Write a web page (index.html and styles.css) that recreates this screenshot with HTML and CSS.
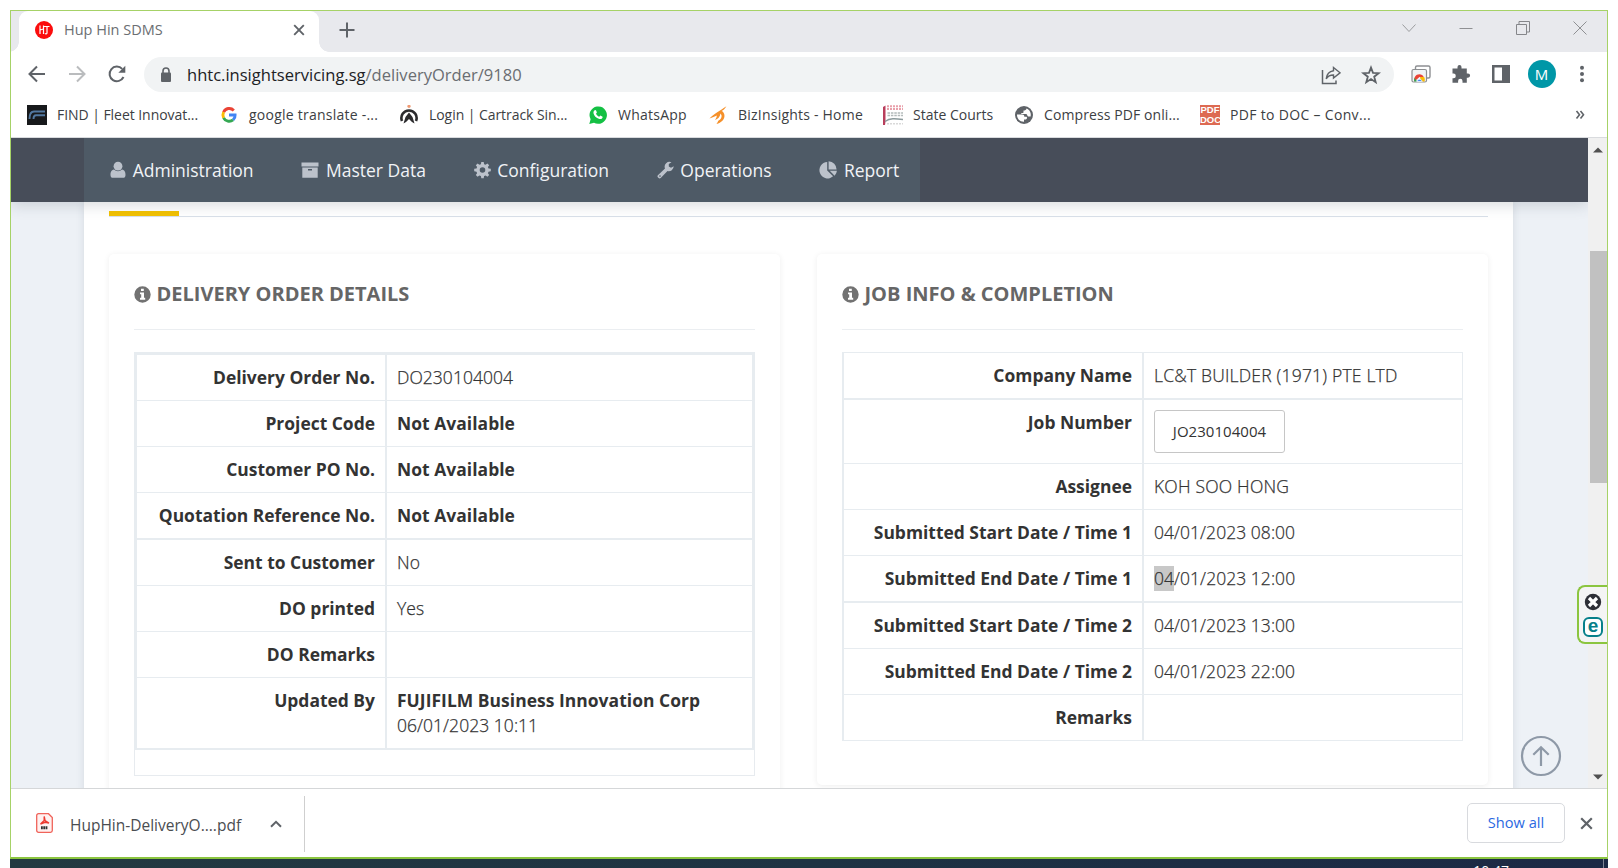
FILE: index.html
```html
<!DOCTYPE html>
<html lang="en">
<head>
<meta charset="utf-8">
<title>Hup Hin SDMS</title>
<link rel="stylesheet" href="styles.css">
</head>
<body>
<div class="window">
  <header class="tabstrip">
    <div class="tab">
      <svg class="fav" width="18" height="18" viewBox="0 0 18 18"><circle cx="9" cy="9" r="9" fill="#fb0d0d"/><path d="M5 4.500v8.500M5 9l3.500-1M8.500 4.500v8.500M8.500 5.500h6M12 5.500v6.500c0 1-1.500 1-2 .3" stroke="#fff" stroke-width="1.200" fill="none"/></svg>
      <span class="tab-title">Hup Hin SDMS</span>
      <svg class="tab-x" width="12" height="12" viewBox="0 0 12 12"><path d="M1.200 1.200l9.600 9.600M10.800 1.200l-9.600 9.600" stroke="#5f6368" stroke-width="1.900"/></svg>
    </div>
    <svg class="plus" width="16" height="16" viewBox="0 0 16 16"><path d="M8 .5v15M.5 8h15" stroke="#5f6368" stroke-width="2"/></svg>
    <div class="controls">
      <span><svg width="14" height="14" viewBox="0 0 14 14"><path d="M.5 3.500L7 10.500l6.500-7" fill="none" stroke="#9b9c9f"/></svg></span>
      <span><svg width="14" height="14" viewBox="0 0 14 14"><path d="M.5 7.500h13" stroke="#8f9093"/></svg></span>
      <span><svg width="14" height="14" viewBox="0 0 14 14"><path d="M.5 3.500h10v10h-10zM3 3.500v-3h10.500v10.500h-3" fill="none" stroke="#85868a"/></svg></span>
      <span><svg width="14" height="14" viewBox="0 0 14 14"><path d="M.5.5l13 13M13.500.5l-13 13" stroke="#8f9093"/></svg></span>
    </div>
  </header>

  <div class="toolbar">
    <svg width="20" height="20" viewBox="0 0 20 20"><path d="M18 10H3M10 2.500L2.500 10l7.500 7.500" fill="none" stroke="#5f6368" stroke-width="2"/></svg>
    <svg width="20" height="20" viewBox="0 0 20 20"><path d="M2 10h15M10 2.500l7.500 7.500-7.500 7.500" fill="none" stroke="#babcbe" stroke-width="2"/></svg>
    <svg width="20" height="20" viewBox="0 0 20 20"><path d="M16.500 13A7.300 7.300 0 1 1 15.200 4.900" fill="none" stroke="#5f6368" stroke-width="2"/><path d="M18.300 1.800v7h-7z" fill="#5f6368"/></svg>
    <div class="address">
      <svg width="20" height="20" viewBox="0 0 20 20"><rect x="5" y="7.500" width="10" height="9.500" rx="1" fill="#5f6368"/><path d="M7 8V6a3 3 0 0 1 6 0v2" fill="none" stroke="#5f6368" stroke-width="1.600"/></svg>
      <span class="url">hhtc.insightservicing.sg<span class="path">/deliveryOrder/9180</span></span>
      <svg class="share" width="20" height="20" viewBox="0 0 20 20"><path d="M1.500 5v13.500H15V15.500" fill="none" stroke="#5f6368" stroke-width="1.500"/><path d="M12.500 2.500l6.500 5.300-6.500 5.200V10c-3.500 0-5.700 1.200-7.300 3.800C5.700 9.500 8.200 6.300 12.500 5.700z" fill="none" stroke="#5f6368" stroke-width="1.400"/></svg>
      <svg width="20" height="20" viewBox="0 0 20 20"><path d="M10 2.600l2 5.300 5.600.3-4.400 3.500 1.500 5.500L10 14.100l-4.700 3.100 1.500-5.500L2.400 8.200 8 7.900z" fill="none" stroke="#5f6368" stroke-width="1.800"/></svg>
    </div>
    <svg width="20" height="20" viewBox="0 0 20 20"><rect x="4.500" y="2" width="14.500" height="12" rx="1.500" fill="#fff" stroke="#8d8f92" stroke-width="1.400"/><rect x="1" y="5.500" width="14.500" height="12.500" rx="1.500" fill="#f1f3f4" stroke="#8d8f92" stroke-width="1.200"/><path d="M3.300 17.500c-.8-4 1.500-7.300 5.100-7.300 2 0 3.500 1 4.300 2.800H8.500z" fill="#ea4335"/><path d="M9 13h4.200c.8 1.500.8 3 .3 4.500H10z" fill="#fbbc04"/><path d="M3.300 17.500a5 5 0 0 1 .2-3.500l2.800 3.500z" fill="#34a853"/><path d="M5.700 17.500a2.900 2.900 0 0 1 5.600 0z" fill="#4285f4" stroke="#fff" stroke-width=".7"/></svg>
    <svg width="20" height="20" viewBox="0 0 20 20"><path d="M1.500 4.500h5V3a2 2 0 0 1 4 0v1.500h5.300v5H17a2 2 0 0 1 0 4.200h-1.200v5H11.500V17a2.200 2.200 0 0 0-4.400 0v1.700H1.500v-4.500h1a2.300 2.300 0 0 0 0-4.600h-1z" fill="#5f6368"/></svg>
    <svg width="20" height="20" viewBox="0 0 20 20"><path d="M1 1h18v18H1zM3.500 3.500v13H11v-13z" fill="#5f6368" fill-rule="evenodd"/></svg>
    <span class="avatar">M</span>
    <svg width="20" height="20" viewBox="0 0 20 20"><g fill="#5f6368"><circle cx="10" cy="3.800" r="2"/><circle cx="10" cy="10" r="2"/><circle cx="10" cy="16.200" r="2"/></g></svg>
  </div>

  <nav class="bookmarks">
    <a class="bm"><svg width="20" height="20" viewBox="0 0 20 20"><path d="M0 0h20v20H0z" fill="#17191b"/><path d="M2.500 14c0-5 1-7.500 4.500-7.500h11M6.500 14c0-2.500.8-3.700 2.500-3.700h9" fill="none" stroke="#5278a0" stroke-width="1.900"/></svg><span class="t1">FIND | Fleet Innovat...</span></a>
    <a class="bm"><svg width="20" height="20" viewBox="0 0 20 20"><g fill="none" stroke-width="2.900"><path d="M14.800 5.400A6.200 6.200 0 0 0 4.600 7.200" stroke="#ea4335"/><path d="M4.600 7.200a6.400 6.400 0 0 0 0 5.600" stroke="#fbbc05"/><path d="M4.600 12.800a6.200 6.200 0 0 0 9.500 2.100" stroke="#34a853"/><path d="M14.100 14.900a6 6 0 0 0 2-4.900H10" stroke="#4285f4"/></g></svg><span class="t2">google translate -...</span></a>
    <a class="bm"><svg width="20" height="20" viewBox="0 0 20 20"><path d="M3 16A7.600 7.600 0 1 1 17 16" fill="none" stroke="#2b2b2d" stroke-width="2.600"/><path d="M10 7.500l3.500 4.500 2 6.500-2.500-1.500-3-3-3 3-2.500 1.500 2-6.500z" fill="#2b2b2d"/><circle cx="10" cy="1.300" r="1.600" fill="#f09a72"/></svg><span class="t3">Login | Cartrack Sin...</span></a>
    <a class="bm"><svg width="20" height="20" viewBox="0 0 20 20"><path d="M1.300 19l1.300-4.700A8.700 8.700 0 1 1 6 17.700z" fill="#14c044"/><path d="M6.300 5.600c.8-.9 1.500-.8 1.900.2l.7 1.700-.9 1.300c.8 1.500 1.700 2.300 3.200 3l1.200-1.200 2.200 1.100c.3 2-1.700 2.700-3.200 2.300C8 13 6 10.500 5.500 8.200c-.1-1 .1-1.900.8-2.600z" fill="#fff"/></svg><span class="t4">WhatsApp</span></a>
    <a class="bm"><svg width="20" height="20" viewBox="0 0 20 20"><path d="M1.500 13.500C5 9.500 12 5.500 18.500 1.200 17 3.500 15.500 5 13.500 6c4 1.500 5.500 10-5 13 .8-1.200 1.500-2 1.800-3.200 3.500-1.800 4.200-5 2.200-7.300-.5 3.500-2.500 5.500-5.500 6.500 1.200-1.700 1.800-3 1.800-4.500-2 .8-4.500 2-7.300 3z" fill="#f5902a"/></svg><span class="t5">BizInsights - Home</span></a>
    <a class="bm"><svg width="20" height="20" viewBox="0 0 20 20"><path d="M0 2l2.500-1.500v16L2 20H0z" fill="#b93e5c"/><path d="M4 1.300h16M4 4h16" stroke="#e9a0ab" stroke-width="1.900" stroke-dasharray="2 1"/><path d="M4.500 8h15.500M4.500 10.500h15.500" stroke="#b3baba" stroke-width="1.600" stroke-dasharray="2.500 .9"/><path d="M2 16.500c5-3.500 10-3 18-2" fill="none" stroke="#8c9a9c" stroke-width="1.500"/><path d="M4 18.800h16" stroke="#d9d9d9" stroke-width="1.500" stroke-dasharray="2 1"/></svg><span class="t6">State Courts</span></a>
    <a class="bm"><svg width="20" height="20" viewBox="0 0 20 20"><circle cx="10" cy="10" r="9" fill="#5f6368"/><path d="M3 9.500h5c2.300 0 2.300 1 2.300 2.300h1.600c1.800 0 1.500 2.400-.2 2.600H10v2.300c-4 .2-7.200-3-7-7.200zM12.500 3.400c-.3 1.600-1.200 2-3 2v1.800c0 .8-1 .8-2.200.8v1h5c1 0 1 2.500 1.800 2.500h2.500C17.600 8 15.500 4.500 12.500 3.400z" fill="#fff"/></svg><span class="t7">Compress PDF onli...</span></a>
    <a class="bm"><span class="pdfdoc"><i>PDF</i><i>DOC</i></span><span class="t8">PDF to DOC – Conv...</span></a>
    <svg class="more" width="10" height="10" viewBox="0 0 10 10"><path d="M1.500 1l3 3.800-3 3.800M5.500 1l3 3.800-3 3.800" fill="none" stroke="#5f6368" stroke-width="1.600"/></svg>
  </nav>

  <div class="viewport">
    <div class="page">
      <div class="navbar">
        <ul class="menu">
          <li><svg width="16" height="18" viewBox="0 0 16 18"><circle cx="8" cy="5.200" r="4.400"/><path d="M4 8.600C1.200 9 .5 11.500.5 14c0 2 1 2.800 2.500 2.800h10c1.500 0 2.500-.8 2.500-2.800 0-2.500-.7-5-3.500-5.400a5.600 5.600 0 0 1-8 0z"/></svg>Administration</li>
          <li><svg width="18" height="18" viewBox="0 0 18 18"><path d="M.5 1.500h17v4H.5zM1.300 6.500h15.400v10.300H1.300zM7 8v1.400h4V8z" fill-rule="evenodd"/></svg>Master Data</li>
          <li><svg width="17" height="18" viewBox="0 0 17 18"><path d="M7.300 1h2.400l.4 2.200 1.500.6 1.800-1.300 1.800 1.800L13.900 6l.6 1.500 2.300.3v2.500l-2.300.4-.6 1.500 1.300 1.800-1.800 1.800-1.800-1.300-1.500.6-.4 2.200H7.300l-.4-2.200-1.500-.6-1.800 1.300L1.800 14l1.300-1.800-.6-1.500-2.300-.4V7.800l2.300-.3L3.100 6 1.800 4.300l1.800-1.800 1.800 1.300 1.500-.6zM8.500 6.200a2.800 2.800 0 1 0 0 5.600 2.800 2.800 0 0 0 0-5.600z" fill-rule="evenodd"/></svg>Configuration</li>
          <li><svg width="17" height="18" viewBox="0 0 17 18"><path d="M.9 14.200L8 7.500A4.900 4.900 0 0 1 14.500 1.200L11.800 3v2.500l2.200 1.300 2.700-1.600A4.900 4.900 0 0 1 10.500 10l-6.800 7c-.7.700-1.500.6-2.100 0l-.7-.7c-.6-.6-.6-1.500 0-2.100zM3 14.300a.8.800 0 1 0 0 1.600.8.800 0 0 0 0-1.600z" fill-rule="evenodd"/></svg>Operations</li>
          <li><svg width="18" height="18" viewBox="0 0 18 18"><path d="M8.200 1v8.400l5.900 5.900A8.200 8.200 0 1 1 8.200 1zM9.600.3a8.200 8.200 0 0 1 8 8.200h-8zM10.700 9.800h7.200a8 8 0 0 1-2.300 5z"/></svg>Report</li>
        </ul>
      </div>
      <main class="container">
        <div class="tabline"><span class="active-tab"></span></div>
        <div class="cards">
          <section class="card tall">
            <h2><svg width="17" height="17" viewBox="0 0 17 17"><path d="M8.500.3a8.200 8.200 0 1 0 0 16.400 8.200 8.200 0 0 0 0-16.400zM7 2.800h2.800v2.300H7zM6 6.500h4v5.300h1.200v1.900H6v-1.900h1.200V8.300H6z" fill="#727272" fill-rule="evenodd"/></svg>DELIVERY ORDER DETAILS</h2>
            <div class="frame">
              <table class="details thick">
                <tr><th>Delivery Order No.</th><td>DO230104004</td></tr>
                <tr><th>Project Code</th><td><b>Not Available</b></td></tr>
                <tr><th>Customer PO No.</th><td><b>Not Available</b></td></tr>
                <tr class="heavy"><th>Quotation Reference No.</th><td><b>Not Available</b></td></tr>
                <tr><th>Sent to Customer</th><td>No</td></tr>
                <tr><th>DO printed</th><td>Yes</td></tr>
                <tr><th>DO Remarks</th><td></td></tr>
                <tr class="heavy"><th>Updated By</th><td><b>FUJIFILM Business Innovation Corp</b><br>06/01/2023 10:11</td></tr>
              </table>
            </div>
          </section>
          <section class="card">
            <h2><svg width="17" height="17" viewBox="0 0 17 17"><path d="M8.500.3a8.200 8.200 0 1 0 0 16.400 8.200 8.200 0 0 0 0-16.400zM7 2.800h2.800v2.300H7zM6 6.500h4v5.300h1.200v1.900H6v-1.900h1.200V8.300H6z" fill="#727272" fill-rule="evenodd"/></svg>JOB INFO &amp; COMPLETION</h2>
            <table class="details job">
              <tr class="heavy"><th>Company Name</th><td class="caps">LC&amp;T BUILDER (1971) PTE LTD</td></tr>
              <tr><th>Job Number</th><td><span class="btn">JO230104004</span></td></tr>
              <tr><th>Assignee</th><td class="caps">KOH SOO HONG</td></tr>
              <tr><th>Submitted Start Date / Time 1</th><td>04/01/2023 08:00</td></tr>
              <tr class="heavy"><th>Submitted End Date / Time 1</th><td><span class="selected">04</span>/01/2023 12:00</td></tr>
              <tr><th>Submitted Start Date / Time 2</th><td>04/01/2023 13:00</td></tr>
              <tr><th>Submitted End Date / Time 2</th><td>04/01/2023 22:00</td></tr>
              <tr><th>Remarks</th><td></td></tr>
            </table>
          </section>
        </div>
      </main>
      <svg class="to-top" width="42" height="42" viewBox="0 0 42 42"><g fill="none" stroke="#8e99a7" stroke-width="2.200"><circle cx="21" cy="21" r="19"/><path d="M21 31V12.500M13.300 19.800l7.700-7.600 7.700 7.600"/></g></svg>
    </div>
    <div class="scrollbar">
      <svg width="10" height="6" viewBox="0 0 10 6"><path d="M0 5.500L5 .5l5 5z" fill="#505050"/></svg>
      <div class="thumb"></div>
      <svg class="down" width="10" height="6" viewBox="0 0 10 6"><path d="M0 .5l5 5 5-5z" fill="#505050"/></svg>
    </div>
    <div class="widget">
      <svg width="18" height="18" viewBox="0 0 18 18"><circle cx="9" cy="9" r="8.200" fill="#2e2f36"/><path d="M5 5l8 8M13 5l-8 8" stroke="#fff" stroke-width="3.200"/></svg>
      <span class="e">e</span>
    </div>
  </div>

  <footer class="shelf">
    <svg class="pdf" width="17" height="20" viewBox="0 0 17 20"><path d="M2.500.7h10l3.800 3.800v13a1.800 1.800 0 0 1-1.800 1.800h-12a1.800 1.800 0 0 1-1.800-1.800v-15A1.800 1.800 0 0 1 2.500.7z" fill="#fff1f0" stroke="#f0635a" stroke-width="1.300"/><path d="M8.200 3.500v4L4.500 11l4.500-1.700 4 .7-4-2.500z" fill="none" stroke="#ee3a30" stroke-width="1.400"/><path d="M5 14.800h6.500" stroke="#333" stroke-width="3" stroke-dasharray="1.800 .5"/></svg>
    <span class="file">HupHin-DeliveryO....pdf</span>
    <svg class="caret" width="12" height="8" viewBox="0 0 12 8"><path d="M1 6.800l5-5 5 5" fill="none" stroke="#5f6368" stroke-width="2"/></svg>
    <span class="sep"></span>
    <span class="showall">Show all</span>
    <svg class="close" width="13" height="13" viewBox="0 0 13 13"><path d="M1.200 1.200l10.600 10.600M11.800 1.200L1.200 11.800" stroke="#5f6368" stroke-width="2.200"/></svg>
  </footer>
</div>
<div class="taskbar"><span class="clock">10:47</span><span class="peek"></span></div>
</body>
</html>
```

FILE: styles.css
```css
* { box-sizing: border-box; }
html, body { height: 100%; }
body {
  margin: 0;
  padding: 10px 10px 0;
  overflow: hidden;
  background: #fff;
  font-family: "Open Sans", sans-serif;
}
svg { display: block; flex: none; }

.window {
  width: 1598px;
  height: 849px;
  border: 1px solid #a6d267;
  border-bottom: 2px solid #8bc53f;
  display: flex;
  flex-direction: column;
  background: #fff;
}

/* Tab strip */
.tabstrip {
  height: 41px;
  flex: none;
  display: flex;
  background: #e8e9ed;
  overflow: hidden;
}
.tab {
  position: relative;
  width: 300px;
  margin-left: 8px;
  padding: 0 14px 4px 16px;
  display: flex;
  align-items: center;
  background: #fff;
  border-radius: 9px 9px 0 0;
}
.tab::before, .tab::after {
  content: "";
  position: absolute;
  bottom: 0;
  width: 10px;
  height: 10px;
}
.tab::before { left: -10px; background: radial-gradient(circle at 0 0, transparent 9.500px, #fff 10px); }
.tab::after { right: -10px; background: radial-gradient(circle at 100% 0, transparent 9.500px, #fff 10px); }
.tab-title { margin-left: 11px; padding-bottom: 1px; font-size: 14.500px; color: #6b6e72; }
.tab-x { margin-left: auto; }
.plus { margin: 11px 0 0 19.500px; }
.controls { margin: 0 -1px 0 auto; display: flex; height: 33px; }
.controls span { width: 57px; display: flex; align-items: center; justify-content: center; }

/* Address row */
.toolbar {
  height: 45px;
  flex: none;
  padding: 0 0 1px 16px;
  display: flex;
  align-items: center;
  gap: 20px;
}
.address {
  width: 1250px;
  height: 35px;
  margin: 0 -3px;
  padding: 1px 13px 0 12px;
  display: flex;
  align-items: center;
  background: #f1f3f4;
  border-radius: 18px;
}
.url { margin-left: 11px; padding-bottom: 1px; font-size: 16.540px; color: #202124; white-space: nowrap; }
.path { color: #6a6d71; }
.share { margin: 0 20px 0 auto; }
.avatar {
  width: 28px;
  height: 28px;
  margin: 0 -4px 0 -3.500px;
  border-radius: 50%;
  background: #0097a7;
  color: #fff;
  font-size: 15px;
  line-height: 28px;
  text-align: center;
}

/* Bookmarks */
.bookmarks {
  height: 41px;
  flex: none;
  padding: 0 22px 4px 16px;
  display: grid;
  grid-template-columns: 192px 180px 189px 120px 175px 131px 186px 1fr 10px;
  align-items: center;
  border-bottom: 1px solid #d9dbde;
}
.bm { display: flex; align-items: center; gap: 10px; font-size: 14px; color: #3c4043; white-space: nowrap; }
.bm > span:last-child { padding-bottom: 2px; }
.t1 { letter-spacing: -.05px; }
.t2 { letter-spacing: .24px; }
.t3 { letter-spacing: -.06px; }
.t4 { letter-spacing: .25px; }
.t5 { letter-spacing: .22px; }
.t7 { letter-spacing: .09px; }
.t8 { letter-spacing: .32px; }
.pdfdoc {
  width: 20px;
  height: 20px;
  background: #dd6a52;
  color: #fff;
  font: bold 9.500px/10px "Liberation Sans", sans-serif;
  text-align: center;
}
.pdfdoc i { display: block; font-style: normal; }

/* Page viewport */
.viewport { position: relative; height: 651px; flex: none; display: flex; border-bottom: 1px solid #d5d7d9; }
.page { position: relative; width: 1577px; overflow: hidden; background: #edf1f6; }
.navbar {
  position: relative;
  z-index: 1;
  height: 64px;
  padding-left: 73px;
  background: #474d59;
  box-shadow: 0 3px 14px rgba(60, 70, 85, .2);
}
.menu {
  width: 836px;
  height: 64px;
  margin: 0;
  padding: 0 0 0 26px;
  display: flex;
  align-items: center;
  gap: 47.700px;
  list-style: none;
  background: #4e5a66;
}
.menu li { display: flex; align-items: center; gap: 6.700px; font-size: 17.500px; color: #f1f3f6; white-space: nowrap; }
.menu svg { fill: #bcc2cb; }

.container {
  width: 1429px;
  height: 700px;
  margin-left: 73px;
  padding: 9px 25px 0;
  background: #fff;
  box-shadow: 0 0 8px rgba(100, 115, 135, .18);
}
.tabline { height: 6px; border-bottom: 1px solid #d9e0e9; }
.active-tab { display: block; width: 70px; height: 5px; background: #f2c100; }

.cards { margin-top: 37px; display: flex; gap: 37px; align-items: flex-start; }
.card {
  width: 671px;
  height: 531px;
  padding: 0 25px;
  background: #fff;
  border-radius: 5px;
  box-shadow: 0 1px 6px rgba(0, 0, 0, .07);
}
.card.tall { height: 620px; }
h2 {
  height: 76px;
  margin: 0 0 22px;
  padding: 25px 0 20px;
  display: flex;
  align-items: center;
  gap: 5.500px;
  border-bottom: 1px solid #ebeef1;
  font-size: 20px;
  font-weight: 700;
  line-height: 30px;
  color: #666;
  white-space: nowrap;
}

.frame { height: 424px; border: 1px solid #e7ebef; }
.details {
  width: 621px;
  table-layout: fixed;
  border-collapse: separate;
  border-spacing: 0;
  border: 0 solid #e7ecf0;
  font-size: 17.500px;
  line-height: 25px;
  color: #333;
}
.details th, .details td { height: 46px; padding: 10px; vertical-align: top; border: 0 solid #e7ecf0; border-bottom-width: 1px; }
.details th { border-right-width: 2px; text-align: right; font-weight: 700; font-size: 17.450px; }
.details td { font-weight: 300; letter-spacing: .04px; -webkit-text-stroke: .25px #333; }
.details b { font-size: 17.450px; font-weight: 700; -webkit-text-stroke: 0; }
.heavy th, .heavy td { border-bottom-width: 2px; }
.details .heavy th, .details .heavy td { height: 47px; }
.thick { margin: -1px; border-width: 3px 3px 0; }
.thick th { width: 250px; }
.details.thick tr:last-child td { height: 72px; }
.job { border-width: 1px 1px 0 2px; }
.job th { width: 300px; }
.details td.caps { letter-spacing: .2px; }
.btn {
  display: block;
  width: 131px;
  height: 43px;
  border: 1px solid #c6c6c6;
  border-radius: 3px;
  font-size: 15px;
  font-weight: 400;
  line-height: 41px;
  text-align: center;
  -webkit-text-stroke: 0;
}
.selected { display: inline-block; height: 25px; vertical-align: top; background: #c8c8c8; }
.to-top { position: absolute; left: 1508.500px; top: 596.500px; }

.scrollbar { width: 19px; display: flex; flex-direction: column; align-items: center; padding: 9px 0 8px; background: #f0f0f0; }
.thumb { width: 17px; height: 232px; margin: 98px -1px 0 1px; background: #c1c1c1; }
.down { margin-top: auto; }
.widget {
  position: absolute;
  right: 0;
  top: 447px;
  width: 30px;
  height: 59px;
  padding: 6px 0 0 4px;
  border: 2px solid #8bc53f;
  border-right: 0;
  border-radius: 8px 0 0 8px;
  background: #f4f4f4;
}
.widget svg { margin-left: 1px; }
.e {
  display: block;
  width: 20px;
  height: 20px;
  margin-top: 6px;
  border: 2px solid #07808a;
  border-radius: 6px;
  background: #fff;
  color: #07808a;
  font: bold 19px/13px "Liberation Sans", sans-serif;
  text-align: center;
}

/* Download shelf */
.shelf { height: 68px; flex: none; padding: 0 14px 0 25px; display: flex; align-items: center; }
.file { width: 171px; margin-left: 17px; padding-top: 3px; font-size: 15.500px; color: #4a4d51; white-space: nowrap; }
.caret { margin: 2px 0 0 29px; }
.sep { width: 1px; height: 56px; margin: 2px 0 0 22px; background: #cfcfcf; }
.showall {
  width: 98px;
  height: 40px;
  margin: 0 15px 0 auto;
  border: 1px solid #d8dade;
  border-radius: 5px;
  font-size: 14.600px;
  line-height: 37px;
  text-align: center;
  color: #2b69e2;
}

.taskbar {
  width: 1598px;
  height: 9px;
  overflow: hidden;
  display: flex;
  justify-content: flex-end;
  background: linear-gradient(90deg, #233a41, #1e3343 50%, #1c2945);
}
.clock { margin: 3px 94px 0 0; font-size: 14px; line-height: 17px; color: #fff; }
.peek { width: 1px; height: 9px; margin-right: 4px; background: #7d8494; }
```
